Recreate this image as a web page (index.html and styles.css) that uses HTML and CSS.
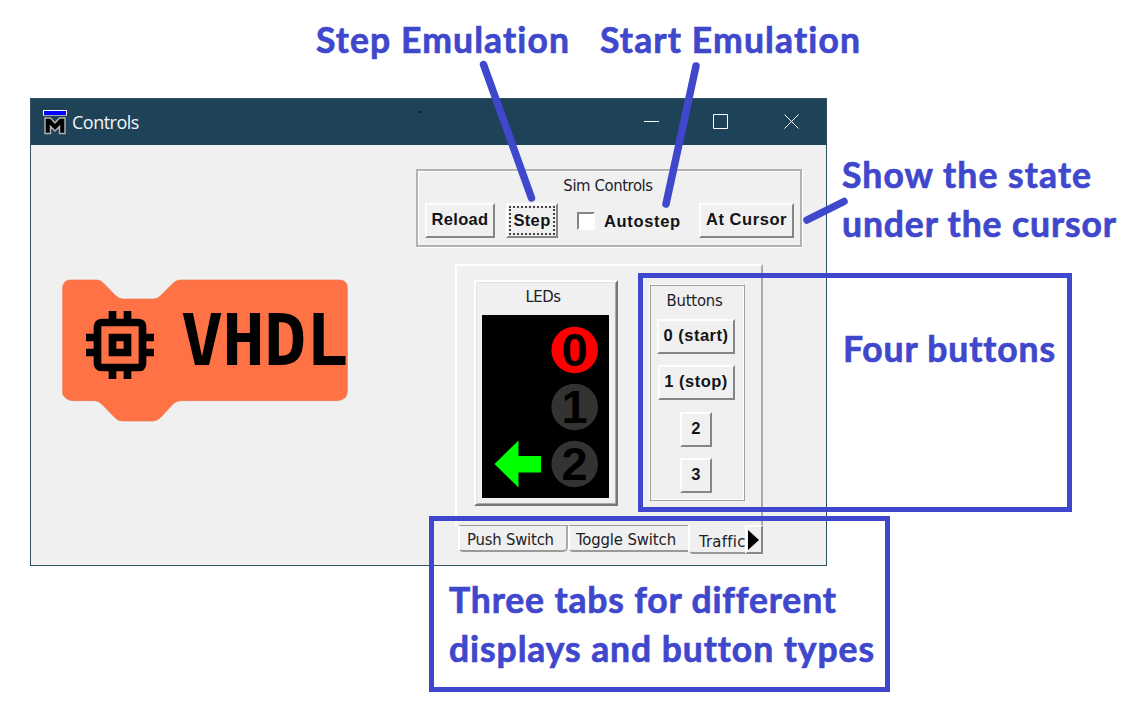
FILE: index.html
```
<!DOCTYPE html>
<html lang="en">
<head>
<meta charset="utf-8">
<title>Controls</title>
<link rel="stylesheet" href="styles.css">
</head>
<body>
<main class="window">
  <header class="titlebar">
    <svg class="app-icon" width="24" height="25" viewBox="0 0 24 25">
      <rect width="24" height="5" fill="#fff"/><rect x="1" y="1" width="22" height="4" fill="#00f"/>
      <rect y="5" width="24" height="1" fill="#aaa"/>
      <path d="M2 8h5.500l4.500 5 4.500-5H22v15.500h-5.500v-7l-4.500 4.500-4.500-4.500v7H2z" fill="#000" stroke="#b5b5b5" stroke-width="1.400"/>
    </svg>
    <h1 class="title">Controls</h1>
    <svg class="caption-buttons" width="156" height="17" viewBox="0 0 156 17" fill="none" stroke="#fff">
      <path d="M0 7.500h15M69.500 .500h14v14h-14zM140.500 .500l14 14M154.500 .500l-14 14"/>
    </svg>
  </header>
  <div class="client">
    <svg class="block" width="310" height="160" viewBox="0 0 930 480">
      <path d="M60 30H140Q152 30 160 39L197 77Q207 87 218 87H310Q322 87 331 78L369 40Q379 30 391 30H868Q892 30 892 54V366Q890 390 862 392H392Q378 393 369 402L334 440Q322 453 308 453H218Q205 453 195 443L158 405Q146 392 134 392H68Q46 390 38 372V50Q42 31 60 30Z" fill="#ff7245" stroke="#ed7650" stroke-width="2"/>
      <g fill="#000">
        <path d="M176 123h23v26h-23zM221 123h23v26h-23zM176 300h23v27h-23zM221 300h23v27h-23zM108 191h27v23h-27zM108 236h27v23h-27zM286 191h26v23h-26zM286 236h26v23h-26z"/>
        <path fill-rule="evenodd" d="M154 146H266Q289 148 289 169V281Q287 304 266 304H154Q133 302 131 281V169Q133 148 154 146ZM154 169V281H266V169ZM176 191H244V259H176ZM199 214V236H221V214Z"/>
      </g>
      <text class="block-name" x="392" y="285" textLength="503">VHDL</text>
    </svg>
    <div class="controls">
      <section class="sim">
        <h2 class="label">Sim Controls</h2>
        <div class="sim-row">
          <button class="btn reload">Reload</button>
          <button class="btn step"><span class="focus">Step</span></button>
          <label class="auto"><span class="check"></span>Autostep</label>
          <button class="btn cursor">At Cursor</button>
        </div>
      </section>
      <section class="tabs">
        <div class="panel">
          <div class="leds">
            <h2 class="label">LEDs</h2>
            <svg class="lights" width="127" height="183" viewBox="0 0 127 183">
              <rect width="127" height="183" fill="#000"/>
              <circle cx="92.700" cy="35" r="23.300" fill="#f00"/>
              <circle cx="92.700" cy="92" r="23.300" fill="#333"/>
              <circle cx="92.700" cy="149" r="23.300" fill="#333"/>
              <path d="M12.500 149L36.500 125.500V141H59V157.500H36.500V172.500Z" fill="#0f0"/>
              <text class="digit" x="92.500" y="51">0</text>
              <text class="digit" x="92.500" y="108">1</text>
              <text class="digit" x="92.500" y="165">2</text>
            </svg>
          </div>
          <div class="button-group">
            <h2 class="label">Buttons</h2>
            <button class="btn b0">0 (start)</button>
            <button class="btn b1">1 (stop)</button>
            <button class="btn small">2</button>
            <button class="btn small">3</button>
          </div>
        </div>
        <nav class="tab-row">
          <span class="tab first">Push Switch</span>
          <span class="tab second">Toggle Switch</span>
          <span class="tab third">Traffic</span>
          <button class="scroll"><svg width="12" height="20" viewBox="0 0 12 20"><path d="M0 0L11 10L0 20Z"/></svg></button>
        </nav>
      </section>
    </div>
  </div>
</main>
<svg class="notes" width="1144" height="716" viewBox="0 0 1144 716">
  <rect x="419" y="111" width="2" height="2" fill="#0a1820"/>
  <g class="strokes">
    <path d="M483.500 64.500L531.500 198M696 66L666 204M807 220L844 201.500"/>
    <rect x="640.500" y="275.500" width="429" height="234"/>
    <rect x="431.500" y="518.500" width="456" height="171"/>
  </g>
  <g class="note-text">
    <text x="316" y="53" textLength="253">Step Emulation</text>
    <text x="600" y="53" textLength="260">Start Emulation</text>
    <text x="842" y="188" textLength="249">Show the state</text>
    <text x="842" y="237" textLength="274">under the cursor</text>
    <text x="843" y="362" textLength="212">Four buttons</text>
    <text x="449" y="613" textLength="387">Three tabs for different</text>
    <text x="449" y="662" textLength="425">displays and button types</text>
  </g>
</svg>
</body>
</html>
```
FILE: styles.css
```
* { box-sizing: border-box; }
body { margin: 0; width: 1144px; height: 716px; padding: 98px 0 0 30px; background: #fff; overflow: hidden; position: relative; font-family: "DejaVu Sans Condensed", "DejaVu Sans", sans-serif; }
.window { width: 797px; height: 468px; border: 1px solid #2f5266; background: #f0f0f0; }
.titlebar { height: 46px; padding: 0 26px 0 12px; display: flex; align-items: center; background: #1e4258; }
.title { margin: 0 0 0 5px; flex: 1; color: #f4f6f7; font: 400 18px/24px "Open Sans", sans-serif; letter-spacing: -.5px; }
.client { display: flex; height: 420px; }
.block { margin: 125px 0 0 19px; flex: none; }
.block-name { font: 700 212px "DejaVu Sans Mono", monospace; }
.controls { margin: 24px 0 0 56px; width: 386px; display: flex; flex-direction: column; align-items: center; }
.label { margin: 0 3px 0 0; text-align: center; color: #202028; font-weight: 400; font-size: 16.5px; line-height: 20px; letter-spacing: -.4px; }
.sim { width: 386px; height: 78px; border: 2px solid #b2b2b2; box-shadow: inset 1px 1px #fff, 1px 1px #fff; padding: 5px 6px 0 7px; }
.sim-row { display: flex; margin-top: 7px; align-items: flex-start; }
.btn { flex: none; height: 35px; padding: 0; border: 2px solid; border-color: #fdfdfd #858585 #858585 #fdfdfd; background: #f0f0f0; color: #141418; font: 700 16.5px/29px "Liberation Sans", Arial, sans-serif; text-align: center; white-space: nowrap; letter-spacing: .35px; padding-bottom: 2px; }
.reload { width: 70px; }
.step { width: 52px; margin-left: 11px; padding: 0; }
.focus { display: block; margin: 1px; height: 29px; line-height: 25px; border: 2px dotted #444; }
.auto { display: flex; width: 124px; margin: 9px 0 0 19px; font: 700 16.5px/19px "Liberation Sans", Arial, sans-serif; letter-spacing: .65px; color: #141418; }
.check { width: 18px; height: 18px; margin-right: 9px; border: 2px solid; border-color: #858585 #fff #fff #858585; background: #fff; }
.cursor { width: 95px; letter-spacing: .55px; }
.tabs { width: 308px; margin-top: 17px; }
.panel { height: 261px; display: flex; align-items: flex-start; border: 2px solid; border-color: #fff #aaa transparent #fff; border-bottom: 0; padding: 14px 17px 0 17px; }
.leds { width: 144px; height: 226px; border: 2px solid; border-color: #fff #777 #777 #fff; box-shadow: inset 1px 1px #e2e2e2, inset -1px -1px #aaa; padding: 5px 7px 0 6px; }
.leds .label { margin-right: 5px; }
.lights { display: block; margin-top: 8px; }
.digit { font: 700 47px "Liberation Sans", Arial, sans-serif; text-anchor: middle; }
.button-group { width: 96px; height: 217px; margin: 4px 0 0 31px; border: 1px solid; border-color: #fff #a0a0a0 #a0a0a0 #fff; box-shadow: inset 1px 1px #a0a0a0, inset -1px -1px #fff; padding: 6px 9px 0 7px; display: flex; flex-direction: column; align-items: center; gap: 11.5px; }
.button-group .label { margin-bottom: -4px; letter-spacing: -.2px; }
.button-group .btn { letter-spacing: .5px; }
.b0 { width: 78px; }
.b1 { width: 77px; }
.small { width: 32px; }
.tab-row { display: flex; height: 30px; align-items: flex-start; font-size: 16.5px; line-height: 27px; letter-spacing: -.2px; color: #202028; }
.tab { white-space: nowrap; overflow: hidden; border-bottom: 2px solid #999; border-left: 2px solid #fff; height: 27px; }
.first { margin-left: 3px; width: 110px; padding-left: 7px; border-top: 1px solid #999; border-right: 2px solid #aaa; border-radius: 0 0 5px 5px; }
.second { width: 120px; padding-left: 6px; border-top: 1px solid #999; border-radius: 0 0 0 5px; letter-spacing: -.1px; }
.third { width: 57px; height: 29px; padding-left: 9px; line-height: 34px; border-radius: 0 0 0 5px; letter-spacing: .3px; }
.scroll { flex: none; width: 18px; height: 29px; padding: 0; border: 2px solid; border-color: #fff #888 #888 #fff; background: #f0f0f0; display: flex; align-items: center; justify-content: center; }
.notes { position: absolute; left: 0; top: 0; pointer-events: none; }
.strokes { fill: none; stroke: #3f48cc; stroke-width: 5; }
.strokes path { stroke-width: 7.5; stroke-linecap: round; }
.note-text { fill: #3f48cc; stroke: #3f48cc; stroke-width: .7; font: 700 35.5px Lato, sans-serif; font-variant-ligatures: none; }
```
